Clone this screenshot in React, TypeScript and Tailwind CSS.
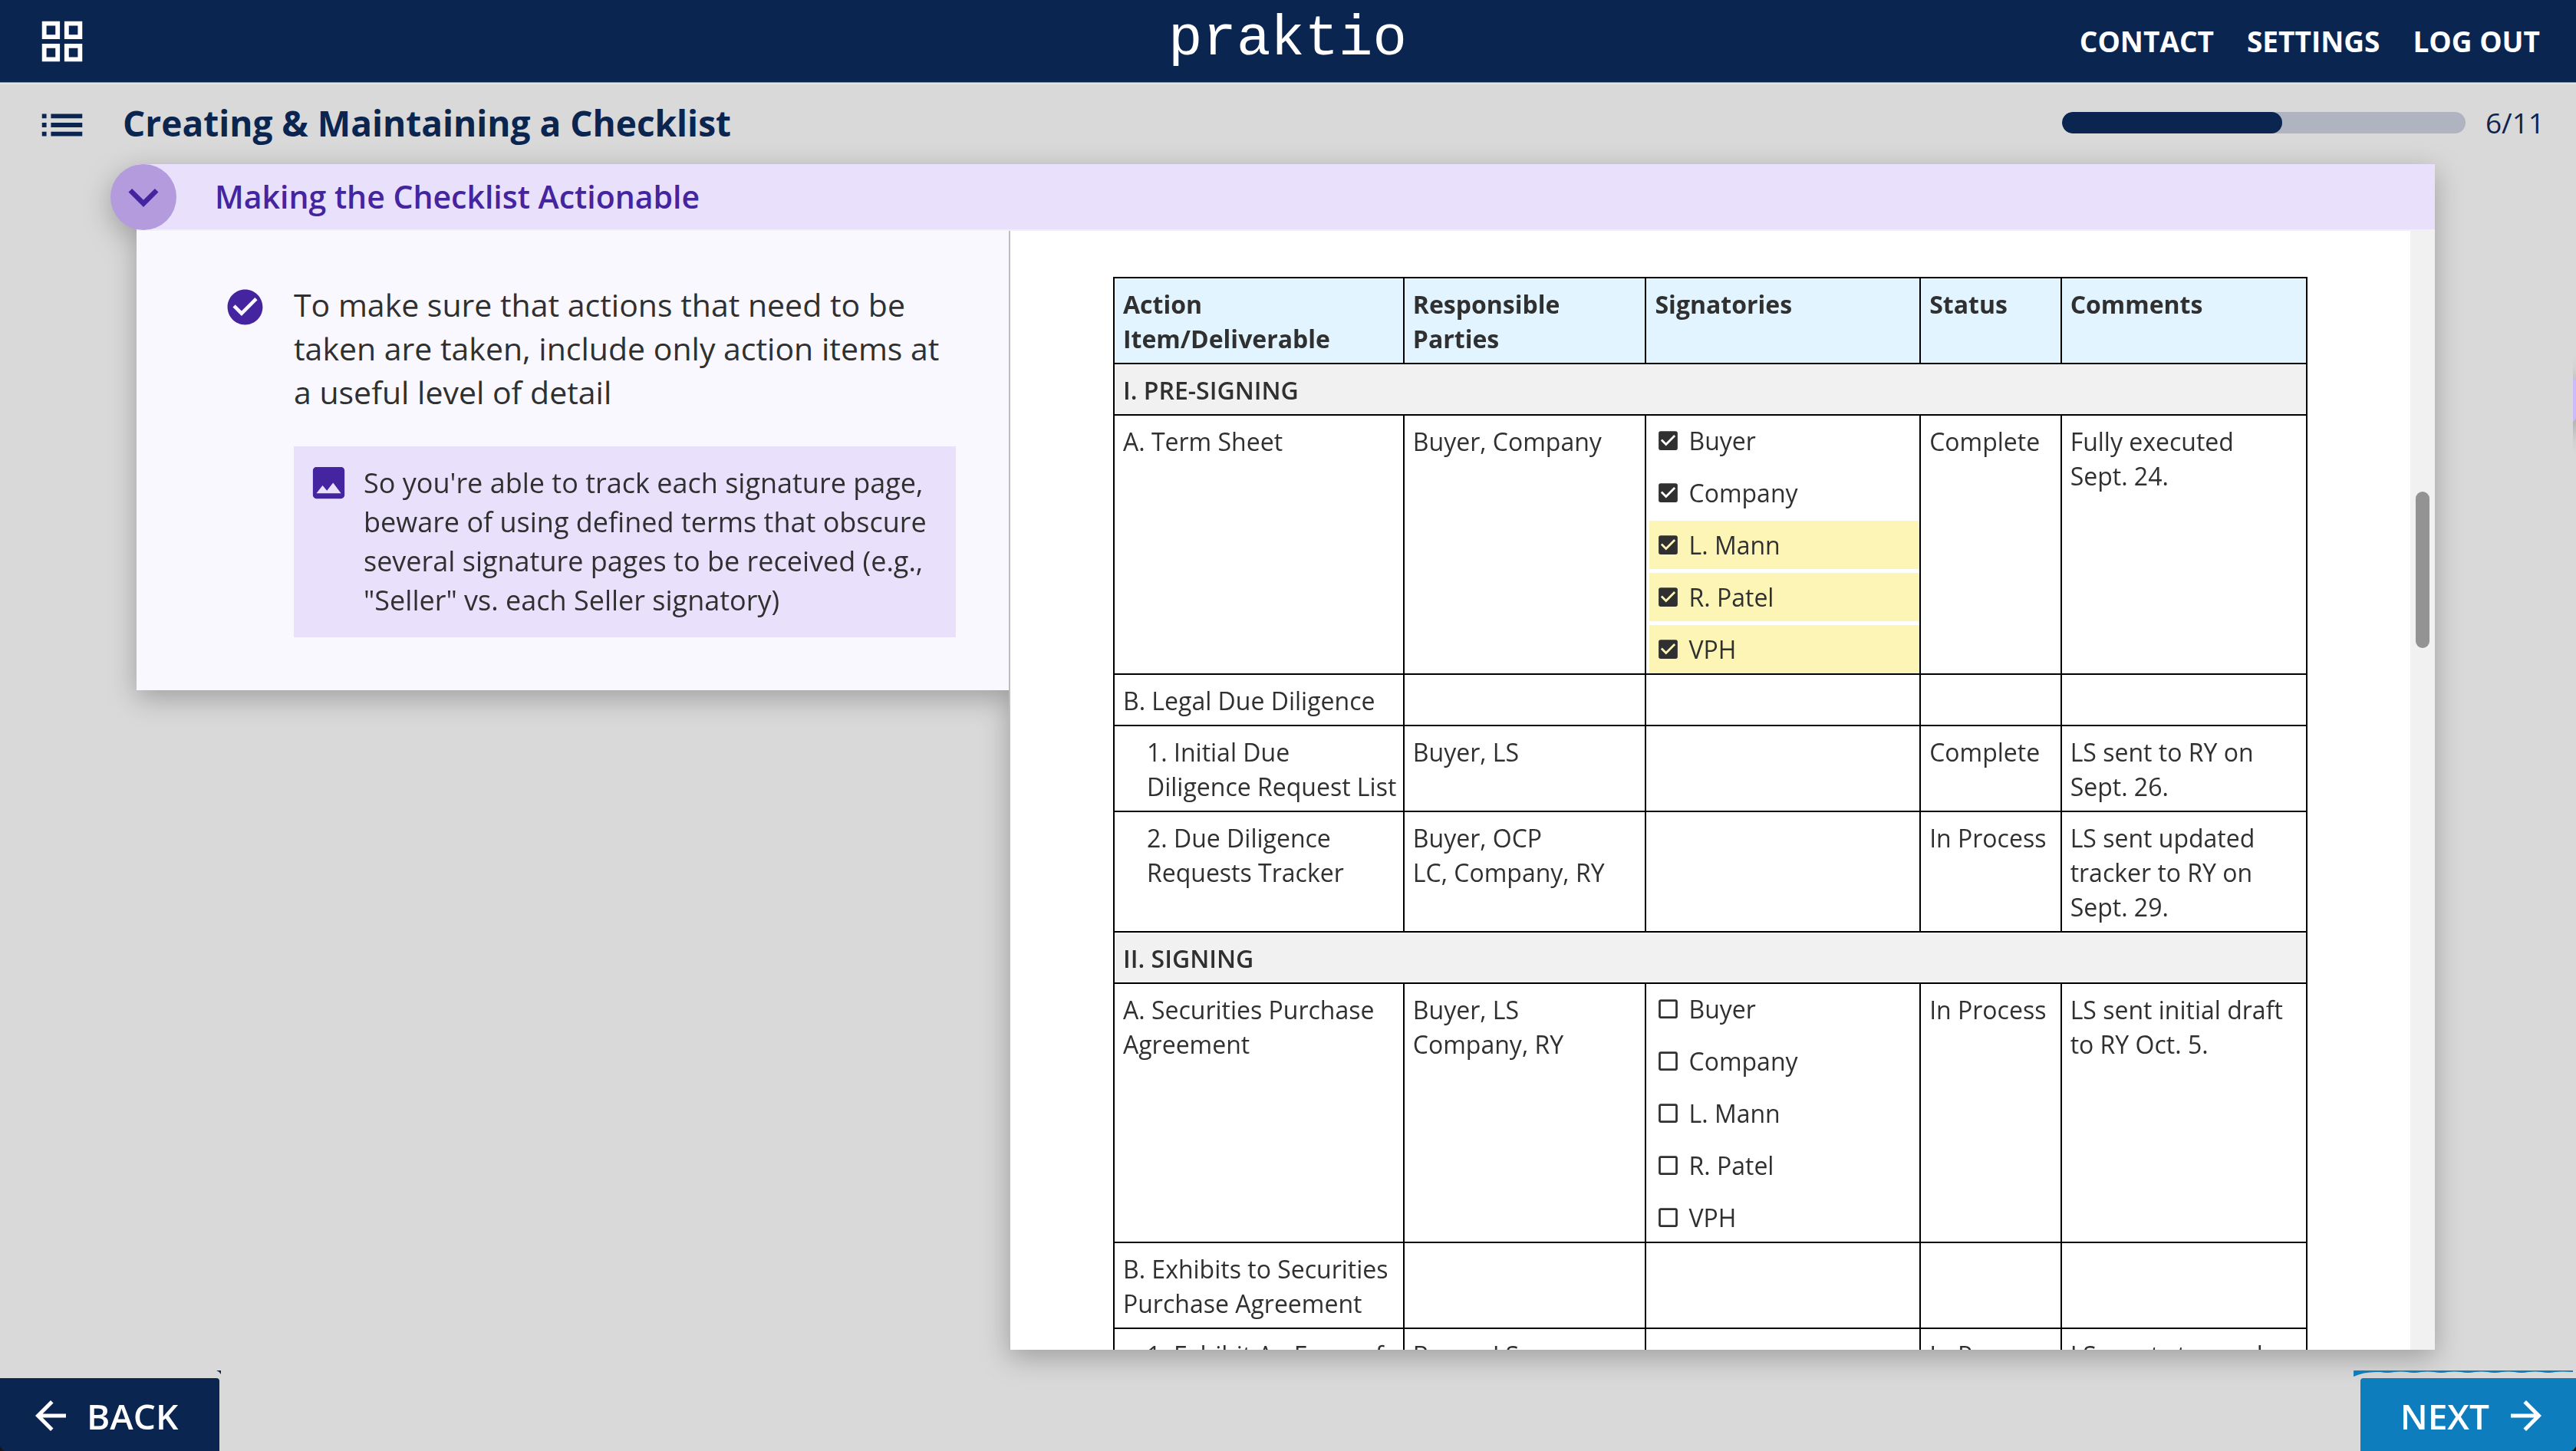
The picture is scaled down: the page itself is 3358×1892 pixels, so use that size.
import {
  MdArrowBack,
  MdArrowForward,
  MdCheckBox,
  MdCheckBoxOutlineBlank,
  MdCheckCircle,
  MdExpandMore,
  MdImage,
  MdList,
  MdOutlineGridView,
} from "react-icons/md";

type Signatory = { name: string; signed?: boolean; highlighted?: boolean };

type Item = {
  kind: "item";
  title: string;
  nested?: boolean;
  parties?: string[];
  signatories?: Signatory[];
  status?: string;
  comments?: string;
};

type Row = Item | { kind: "section"; title: string };

const rows: Row[] = [
  { kind: "section", title: "I. PRE-SIGNING" },
  {
    kind: "item",
    title: "A. Term Sheet",
    parties: ["Buyer, Company"],
    signatories: [
      { name: "Buyer", signed: true },
      { name: "Company", signed: true },
      { name: "L. Mann", signed: true, highlighted: true },
      { name: "R. Patel", signed: true, highlighted: true },
      { name: "VPH", signed: true, highlighted: true },
    ],
    status: "Complete",
    comments: "Fully executed Sept. 24.",
  },
  { kind: "item", title: "B. Legal Due Diligence" },
  {
    kind: "item",
    title: "1. Initial Due Diligence Request List",
    nested: true,
    parties: ["Buyer, LS"],
    status: "Complete",
    comments: "LS sent to RY on Sept. 26.",
  },
  {
    kind: "item",
    title: "2. Due Diligence Requests Tracker",
    nested: true,
    parties: ["Buyer, OCP", "LC, Company, RY"],
    status: "In Process",
    comments: "LS sent updated tracker to RY on Sept. 29.",
  },
  { kind: "section", title: "II. SIGNING" },
  {
    kind: "item",
    title: "A. Securities Purchase Agreement",
    parties: ["Buyer, LS", "Company, RY"],
    signatories: [
      { name: "Buyer" },
      { name: "Company" },
      { name: "L. Mann" },
      { name: "R. Patel" },
      { name: "VPH" },
    ],
    status: "In Process",
    comments: "LS sent initial draft to RY Oct. 5.",
  },
  { kind: "item", title: "B. Exhibits to Securities Purchase Agreement" },
  {
    kind: "item",
    title: "1. Exhibit A - Form of",
    nested: true,
    parties: ["Buyer, LS"],
    status: "In Process",
    comments: "LS wants to send",
  },
];

const columns = [
  { label: "Action Item/Deliverable", width: "w-[24.3%]" },
  { label: "Responsible Parties", width: "w-[20.3%]" },
  { label: "Signatories", width: "w-[23%]" },
  { label: "Status", width: "w-[11.8%]" },
  { label: "Comments", width: "w-[20.6%]" },
];

const cell = "border-2 border-black pt-[11px] pb-[9px] pl-[11px] pr-1.5 text-left align-top";

function SignatoryBox({ name, signed, highlighted }: Signatory) {
  const Icon = signed ? MdCheckBox : MdCheckBoxOutlineBlank;
  return (
    <li className={highlighted ? "bg-[#fcf5b5]" : ""}>
      <label className="flex h-[63px] items-center gap-2.5 pl-2">
        <span className="relative block size-[33px]">
          <input
            type="checkbox"
            checked={!!signed}
            readOnly
            className="absolute inset-0 size-full appearance-none"
          />
          <Icon className="pointer-events-none size-full" />
        </span>
        {name}
      </label>
    </li>
  );
}

function ItemRow({ item }: { item: Item }) {
  return (
    <tr>
      <td className={cell}>
        <div className={item.nested ? "pl-[31px]" : ""}>{item.title}</div>
      </td>
      <td className={cell}>
        {item.parties?.map((line) => (
          <div key={line}>{line}</div>
        ))}
      </td>
      {item.signatories ? (
        <td className="border-2 border-black pt-px pl-1 align-top">
          <ul className="flex flex-col gap-[5px]">
            {item.signatories.map((s) => (
              <SignatoryBox key={s.name} {...s} />
            ))}
          </ul>
        </td>
      ) : (
        <td className={cell} />
      )}
      <td className={cell}>{item.status}</td>
      <td className={cell}>
        <div className="pr-3">{item.comments}</div>
      </td>
    </tr>
  );
}

function ChecklistTable() {
  return (
    <table className="w-full table-fixed border-collapse text-[32px] leading-[45px]">
      <thead>
        <tr className="bg-[#e1f4ff]">
          {columns.map((c) => (
            <th
              key={c.label}
              scope="col"
              className={`${c.width} border-2 border-black pt-[11px] pr-1 pb-[9px] pl-[11px] text-left align-top font-bold`}
            >
              {c.label}
            </th>
          ))}
        </tr>
      </thead>
      <tbody>
        {rows.map((row) =>
          row.kind === "section" ? (
            <tr key={row.title} className="bg-[#f1f1f1]">
              <th
                scope="colgroup"
                colSpan={5}
                className="border-2 border-black pt-[11px] pr-1 pb-[9px] pl-[11px] text-left align-top font-semibold"
              >
                {row.title}
              </th>
            </tr>
          ) : (
            <ItemRow key={row.title} item={row} />
          ),
        )}
      </tbody>
    </table>
  );
}

function TopBar() {
  return (
    <header className="grid h-[108px] shrink-0 grid-cols-[1fr_auto_1fr] items-center border-b border-[#8d93a6] bg-[#0b2551] pr-[47px] pl-[46px] text-white">
      <button type="button" aria-label="All courses" className="justify-self-start">
        <MdOutlineGridView className="size-[70px]" />
      </button>
      <a href="#home" className="pb-1.5 font-['Liberation_Mono',monospace] text-[74px] leading-[84px]">
        praktio
      </a>
      <nav className="flex justify-end gap-[43px] text-[37px] leading-[50px] font-bold">
        <a href="#contact">CONTACT</a>
        <a href="#settings">SETTINGS</a>
        <a href="#logout">LOG OUT</a>
      </nav>
    </header>
  );
}

function LessonBar() {
  const done = 6;
  const total = 11;
  return (
    <div className="flex h-[106px] shrink-0 items-center border-t-2 border-[#e6e6e6] pr-[41px] pb-1 pl-[46px] text-[#0b2551]">
      <button type="button" aria-label="Lesson outline" className="pt-1.5">
        <MdList className="size-[70px]" />
      </button>
      <h1 className="pl-11 text-[46px] leading-[60px] font-bold">Creating &amp; Maintaining a Checklist</h1>
      <div className="ml-auto flex items-center">
        <div
          role="progressbar"
          aria-label="Lesson progress"
          aria-valuenow={done}
          aria-valuemin={0}
          aria-valuemax={total}
          className="h-7 w-[526px] overflow-hidden rounded-full bg-[#b0b3c0]"
        >
          <div className="h-full rounded-full bg-[#0b2551]" style={{ width: `${(done / total) * 100}%` }} />
        </div>
        <span className="pl-[26px] text-[37px] leading-[50px]">
          {done}/{total}
        </span>
      </div>
    </div>
  );
}

function Lesson() {
  return (
    <section className="mr-[184px] ml-[178px] flex min-h-0 flex-1 flex-col drop-shadow-[0_10px_18px_rgba(0,0,0,0.27)]">
      <div className="flex h-[87px] shrink-0 items-center border-b-2 border-[#f1f1f1] bg-[#e9e0fc]">
        <button
          type="button"
          aria-label="Collapse section"
          className="z-10 -ml-[34px] grid size-[86px] place-items-center rounded-full bg-[#b39bdd] text-[#44259f]"
        >
          <MdExpandMore className="size-[78px]" />
        </button>
        <h2 className="pb-0.5 pl-[50px] text-[41px] leading-[56px] font-semibold text-[#44259f]">
          Making the Checklist Actionable
        </h2>
      </div>
      <div className="flex min-h-0 flex-1 items-start">
        <div className="flex w-[37.95%] items-start gap-9 bg-[#faf8ff] pt-[68px] pr-[69px] pb-[69px] pl-[114px]">
          <MdCheckCircle className="mt-1 size-[55px] shrink-0 text-[#44259f]" />
          <div className="flex-1">
            <p className="text-[41px] leading-[57px]">
              To make sure that actions that need to be taken are taken, include only action items at a useful level of
              detail
            </p>
            <div className="mt-[42px] flex items-start gap-[18px] bg-[#e9e0fc] pt-5 pr-1 pb-[23px] pl-[18px]">
              <MdImage className="size-[55px] shrink-0 text-[#44259f]" />
              <p className="pt-0.5 text-[36px] leading-[51px]">
                So you're able to track each signature page, beware of using defined terms that obscure several
                signature pages to be received (e.g., "Seller" vs. each Seller signatory)
              </p>
            </div>
          </div>
        </div>
        <div className="flex h-full flex-1 border-l-2 border-[#bdbdc0] bg-white">
          <div className="h-full flex-1 overflow-hidden px-[134px] pt-[60px]">
            <ChecklistTable />
          </div>
          <div className="w-8 bg-[#f1f1f1] px-[7px] pt-[340px]">
            <div className="h-[204px] rounded-full bg-[#939393]" />
          </div>
        </div>
      </div>
    </section>
  );
}

function Footer() {
  return (
    <footer className="relative mt-[37px] flex h-[95px] shrink-0 justify-between text-[46px] leading-[62px] font-semibold text-white">
      <button type="button" className="flex items-center gap-[17px] rounded-tr-sm bg-[#0b2551] pt-0.5 pr-[54px] pl-9">
        <MdArrowBack className="size-[60px]" />
        BACK
      </button>
      <button type="button" className="flex items-center gap-[18px] rounded-tl-sm bg-[#0d7dbd] pt-0.5 pr-[35px] pl-[52px]">
        NEXT
        <MdArrowForward className="size-[60px]" />
      </button>
      <svg aria-hidden className="absolute -top-[10px] left-[281px] h-[6px] w-[7px] text-[#0b2551]" viewBox="0 0 7 6">
        <path d="M1 0h6v5L4.5 1.8z" fill="currentColor" />
      </svg>
      <svg aria-hidden className="absolute -top-[10px] right-1 h-2 w-[286px] text-[#0d7dbd]" viewBox="0 0 286 8">
        <path
          d="M0 1Q0 0 1 0H286V2Q271 1 263 2Q254 4 245 2Q237 1 228 2Q219 4 210 2Q202 1 193 2Q184 4 175 2Q167 1 158 2Q149 4 140 2Q132 1 123 2Q114 4 105 2Q97 1 88 2Q79 4 70 2Q62 1 53 2Q44 4 35 2Q14 1 0 8z"
          fill="currentColor"
        />
      </svg>
      <svg aria-hidden className="absolute bottom-0 left-0 size-[6px]" viewBox="0 0 6 6">
        <path d="M0 0Q2 4 6 6H0z" fill="#1a1410" />
      </svg>
      <svg aria-hidden className="absolute right-0 bottom-0 size-[6px]" viewBox="0 0 6 6">
        <path d="M6 0Q4 4 0 6H6z" fill="#1a1410" />
      </svg>
    </footer>
  );
}

function EdgeHandle() {
  return (
    <div className="absolute top-[440px] right-0 h-[162px] w-1 overflow-hidden">
      <div className="absolute top-[39px] -left-[72px] size-[84px] rounded-full bg-[#cdbbf8] shadow-[0_8px_30px_rgba(0,0,0,0.3)]" />
    </div>
  );
}

export default function App() {
  return (
    <main className="relative flex h-screen flex-col overflow-hidden bg-[#d9d9d9] font-['Open_Sans',sans-serif] text-[#303030]">
      <TopBar />
      <LessonBar />
      <Lesson />
      <Footer />
      <EdgeHandle />
    </main>
  );
}
